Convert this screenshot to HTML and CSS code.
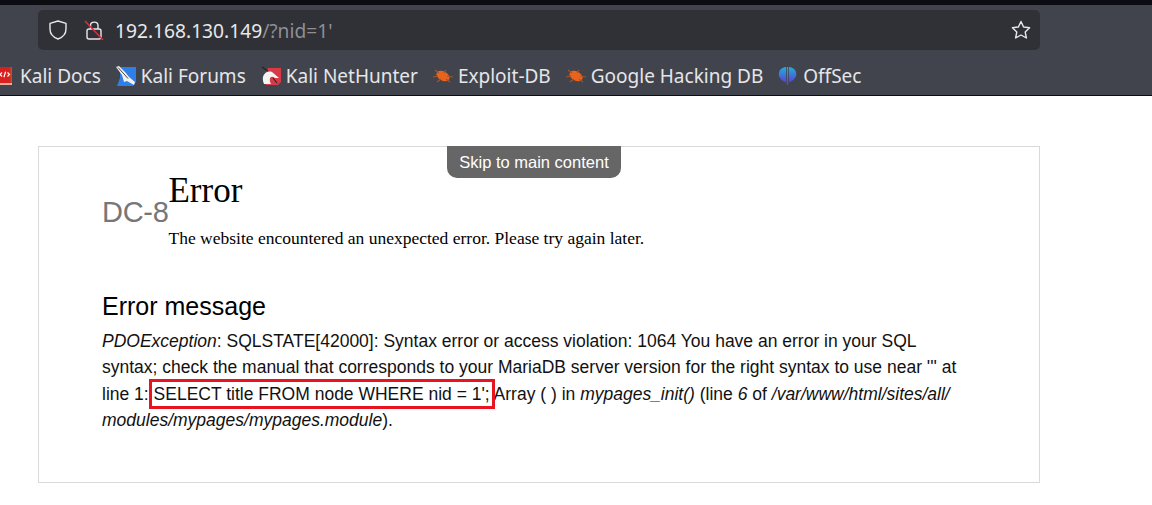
FILE: index.html
```html
<!DOCTYPE html>
<html lang="en">
<head>
  <meta charset="UTF-8" />
  <title>Error | DC-8</title>
  <link rel="stylesheet" href="styles.css">
</head>
<body>
  <div class="topstrip"></div>
  <div class="toolbar">
    <div class="urlbar">
      <svg class="url-icon" width="20" height="20" viewBox="0 0 20 20" fill="none" stroke="#e8e8ea" stroke-width="1.4">
        <path d="M10 1 L18 3.4 V9 C18 14 14.5 17.4 10 19 C5.5 17.4 2 14 2 9 V3.4 Z" stroke-linejoin="round"/>
      </svg>
      <svg class="url-icon lock" width="20" height="20" viewBox="0 0 20 20" fill="none" stroke="#e8e8ea" stroke-width="1.4">
        <path d="M6.5 9 V5.5 C6.5 1 14 1 14 5.5 V9"/>
        <rect x="3" y="9" width="14" height="10" rx="2"/>
        <path d="M1 1 L19 20" stroke="#e22b3a" stroke-width="1.5"/>
      </svg>
      <span class="url-host">192.168.130.149</span><span class="url-path">/?nid=1'</span>
      <svg class="star" width="20" height="20" viewBox="0 0 20 20" fill="none" stroke="#e8e8ea" stroke-width="1.4" stroke-linejoin="round">
        <path d="M10 1.5 L12.6 7 L18.6 7.8 L14.2 12 L15.4 18 L10 15 L4.6 18 L5.8 12 L1.4 7.8 L7.4 7 Z"/>
      </svg>
    </div>
  </div>
  <div class="bookmarks">
    <div class="bookmark">
      <svg width="20" height="20" viewBox="-5 0 20 20">
        <rect x="-5" y="1" width="17" height="16" fill="#d8201f"/>
        <rect x="-5" y="17" width="17" height="2" fill="#e8a8a0"/>
        <rect x="10.5" y="1" width="1.5" height="16" fill="#b8561c"/>
        <path d="M2 6.5 L0 8.5 L2 10.5 M7.5 6.5 L9.5 8.5 L7.5 10.5 M5.6 5.8 L3.9 11.2" fill="none" stroke="#fff" stroke-width="1.2"/>
      </svg>
      Kali Docs
    </div>
    <div class="bookmark">
      <svg width="20" height="20" viewBox="0 0 20 20">
        <path d="M4 1 H20 V16 L17 20 H1 L4 12 Z" fill="#2f7fe8"/>
        <path d="M0 1 L3 0 L9 6 L13 11 L19 16 L18 19 L11 15 L8 16 L6 9 Z" fill="#f2f2f2"/>
        <path d="M2 1.5 L8 8 L12 12.5" fill="none" stroke="#333" stroke-width="0.9"/>
      </svg>
      Kali Forums
    </div>
    <div class="bookmark">
      <svg width="20" height="20" viewBox="0 0 20 20">
        <path d="M7 2 H20 V16 L17 19 H5 L3 12 Z" fill="#d93a48"/>
        <path d="M3 18 C-1 9 6 4 11 6 L18 12 L14 12 C10 9 7 12 10 18 Z" fill="#f4f4f4"/>
        <path d="M1 1 L7 5 M12 12 L16 17" stroke="#222" stroke-width="1.1"/>
      </svg>
      Kali NetHunter
    </div>
    <div class="bookmark">
      <svg width="20" height="20" viewBox="0 0 20 20">
        <ellipse cx="10" cy="10" rx="7" ry="4.6" transform="rotate(28 10 10)" fill="#e8641c"/>
        <path d="M2 4 L6 7 M0 11 L5 10 M4 16 L8 13 M13 4 L11 7 M20 11 L14 10 M17 16 L13 13" stroke="#a85428" stroke-width="1.1"/>
      </svg>
      Exploit-DB
    </div>
    <div class="bookmark">
      <svg width="20" height="20" viewBox="0 0 20 20">
        <ellipse cx="10" cy="10" rx="7" ry="4.6" transform="rotate(28 10 10)" fill="#e8641c"/>
        <path d="M2 4 L6 7 M0 11 L5 10 M4 16 L8 13 M13 4 L11 7 M20 11 L14 10 M17 16 L13 13" stroke="#a85428" stroke-width="1.1"/>
      </svg>
      Google Hacking DB
    </div>
    <div class="bookmark">
      <svg width="20" height="20" viewBox="0 0 20 20">
        <defs>
          <linearGradient id="offsecGrad" x1="0" y1="0" x2="0" y2="1">
            <stop offset="0" stop-color="#22b0d8"/>
            <stop offset="1" stop-color="#5a3fd8"/>
          </linearGradient>
        </defs>
        <path d="M8 1 C3 1.5 0 5 1 10 C1.6 12.5 4.5 15 8 16.5 Z" fill="url(#offsecGrad)"/>
        <path d="M11 1 C16 1.5 19 5 18 10 C17.4 12.5 14.5 15 11 16.5 Z" fill="url(#offsecGrad)"/>
        <path d="M8.8 1 H10.2 V19 H8.8 Z" fill="url(#offsecGrad)"/>
      </svg>
      OffSec
    </div>
  </div>

  <div class="page">
    <div class="site-box">
      <a class="skip-link" href="#main">Skip to main content</a>
      <div class="head-row">
        <div class="site-name">DC-8</div>
        <div class="head-main">
          <h1>Error</h1>
          <p>The website encountered an unexpected error. Please try again later.</p>
        </div>
      </div>
      <h2>Error message</h2>
      <p class="message"><em>PDOException</em>: SQLSTATE[42000]: Syntax error or access violation: 1064 You have an error in your SQL syntax; check the manual that corresponds to your MariaDB server version for the right syntax to use near ''' at line 1: <span class="mark">SELECT title FROM node WHERE nid = 1';</span> Array ( ) in <em>mypages_init()</em> (line <em>6</em> of <em>/var/www/html/sites/all/ modules/mypages/mypages.module</em>).</p>
    </div>
  </div>
</body>
</html>
```
FILE: styles.css
```css
* {
  box-sizing: border-box;
}
body {
  margin: 0;
  background-color: #fff;
  overflow: hidden;
}
.topstrip {
  height: 5px;
  background-color: #0c0d12;
}
.toolbar {
  height: 45px;
  padding-top: 5px;
  padding-left: 38px;
  background-color: #42444d;
}
.urlbar {
  display: flex;
  align-items: center;
  width: 1002px;
  height: 40px;
  padding: 0 9px 0 10px;
  border-radius: 5px;
  background-color: #303136;
  font-family: "Noto Sans", sans-serif;
  font-size: 19.2px;
}
.url-icon {
  flex: none;
}
.lock {
  margin-left: 16px;
  margin-right: 11px;
}
.url-host {
  color: #e8e8ea;
}
.url-path {
  color: #8e8f94;
}
.star {
  margin-left: auto;
}
.bookmarks {
  display: flex;
  align-items: center;
  gap: 15px;
  height: 46px;
  margin-left: -5px;
  padding-top: 7px;
  border-bottom: 1px solid #0c0d12;
  background-color: #42444d;
  font-family: "Noto Sans", sans-serif;
  font-size: 19px;
  color: #e6e6e8;
}
.bookmark {
  display: flex;
  align-items: center;
  gap: 5px;
  white-space: nowrap;
}
.page {
  padding: 50px 0 0 38px;
  font-family: "Liberation Sans", sans-serif;
}
.site-box {
  position: relative;
  width: 1002px;
  height: 337px;
  padding: 25px 70px 0 63px;
  border: 1px solid #d9d9d9;
}
.skip-link {
  position: absolute;
  top: -1px;
  left: 408px;
  width: 174px;
  height: 32px;
  border-radius: 0 0 10px 10px;
  background-color: #666;
  color: #fff;
  font-size: 16.5px;
  line-height: 32px;
  text-align: center;
  text-decoration: none;
}
.head-row {
  display: flex;
}
.site-name {
  margin-top: 24px;
  color: #777;
  font-size: 29px;
  letter-spacing: -0.3px;
  line-height: 32px;
}
h1 {
  margin: 0;
  font-family: "Liberation Serif", serif;
  font-size: 35px;
  font-weight: normal;
  line-height: 38px;
}
.head-main p {
  margin: 17px 0 0;
  font-family: "Liberation Serif", serif;
  font-size: 17.5px;
  line-height: 22px;
}
h2 {
  margin: 42px 0 0;
  font-size: 25px;
  font-weight: normal;
  line-height: 30px;
}
.message {
  margin: 7px 0 0;
  font-size: 17.5px;
  line-height: 26.4px;
  color: #111;
}
.mark {
  outline: 3px solid #e8141f;
  outline-offset: 2px;
}
```
